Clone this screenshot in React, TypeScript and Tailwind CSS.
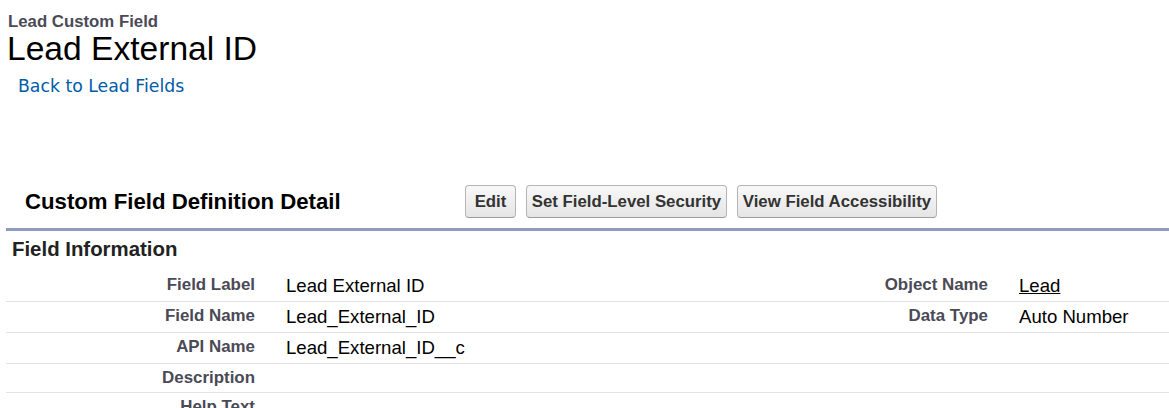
import React from "react";

const rows: { l1: string; v1: string; l2?: string; v2?: string; link?: boolean }[] = [
  { l1: "Field Label", v1: "Lead External ID", l2: "Object Name", v2: "Lead", link: true },
  { l1: "Field Name", v1: "Lead_External_ID", l2: "Data Type", v2: "Auto Number" },
  { l1: "API Name", v1: "Lead_External_ID__c" },
  { l1: "Description", v1: "" },
  { l1: "Help Text", v1: "" },
];

function Btn({ children, className = "" }: { children: React.ReactNode; className?: string }) {
  return (
    <button
      className={
        "flex h-[33px] items-center justify-center whitespace-nowrap rounded-[4px] border border-[#b5b5b5] border-b-[#9c9c9c] bg-gradient-to-b from-[#f8f8f8] to-[#e5e5e5] px-0 text-[16.8px] font-bold leading-[19px] text-[#333] " +
        className
      }
    >
      {children}
    </button>
  );
}

export default function App() {
  return (
    <div
      className="h-[408px] w-full overflow-hidden bg-white text-black"
      style={{ fontFamily: '"Liberation Sans", Arial, sans-serif' }}
    >
      <div className="pl-[6px] pt-[12px]">
        <div className="pl-[2px] text-[16.8px] font-bold leading-[19px] text-[#4a4a56]">Lead Custom Field</div>
        <div className="ml-[1px] text-[33.6px] leading-[36px] text-black">Lead External ID</div>
        <div className="ml-[12px] mt-[8px] h-[20px]">
          <a
            href="#"
            className="text-[17.3px] leading-[20px] text-[#015ba7] no-underline"
            style={{ fontFamily: '"DejaVu Sans", Verdana, sans-serif' }}
          >
            Back to Lead Fields
          </a>
        </div>
      </div>

      <div className="mt-[90px] flex h-[33px] items-center pl-[6px]">
        <div className="w-[459px] pl-[19px] text-[22.2px] font-bold leading-[26px] text-black">
          Custom Field Definition Detail
        </div>
        <div className="flex gap-[10px]">
          <Btn className="w-[51px]">Edit</Btn>
          <Btn className="w-[201px]">Set Field-Level Security</Btn>
          <Btn className="w-[200px]">View Field Accessibility</Btn>
        </div>
      </div>

      <div className="ml-[6px] mt-[10px] border-t-[3px] border-[#8e9dbe]">
        <div className="mt-[7px] pl-[6px] text-[20.4px] font-bold leading-[23px] text-[#222]">Field Information</div>
        <div className="mt-[10px]">
          {rows.map((r) => (
            <div
              key={r.l1}
              className="grid grid-cols-[264px_469px_264px_1fr] border-b border-[#e3e3e3] pb-[4.5px] pt-[4px]"
            >
              <div className="pr-[15px] text-right text-[16.9px] font-bold leading-[19.5px] text-[#4a4a56]">{r.l1}</div>
              <div className="pl-[16px] text-[18.6px] leading-[21.5px] text-black">{r.v1}</div>
              <div className="pr-[15px] text-right text-[16.9px] font-bold leading-[19.5px] text-[#4a4a56]">{r.l2 ?? ""}</div>
              <div className="pl-[16px] text-[18.6px] leading-[21.5px] text-black">
                {r.link ? (
                  <a href="#" className="text-black underline">
                    {r.v2}
                  </a>
                ) : (
                  r.v2 ?? ""
                )}
              </div>
            </div>
          ))}
        </div>
      </div>
    </div>
  );
}
